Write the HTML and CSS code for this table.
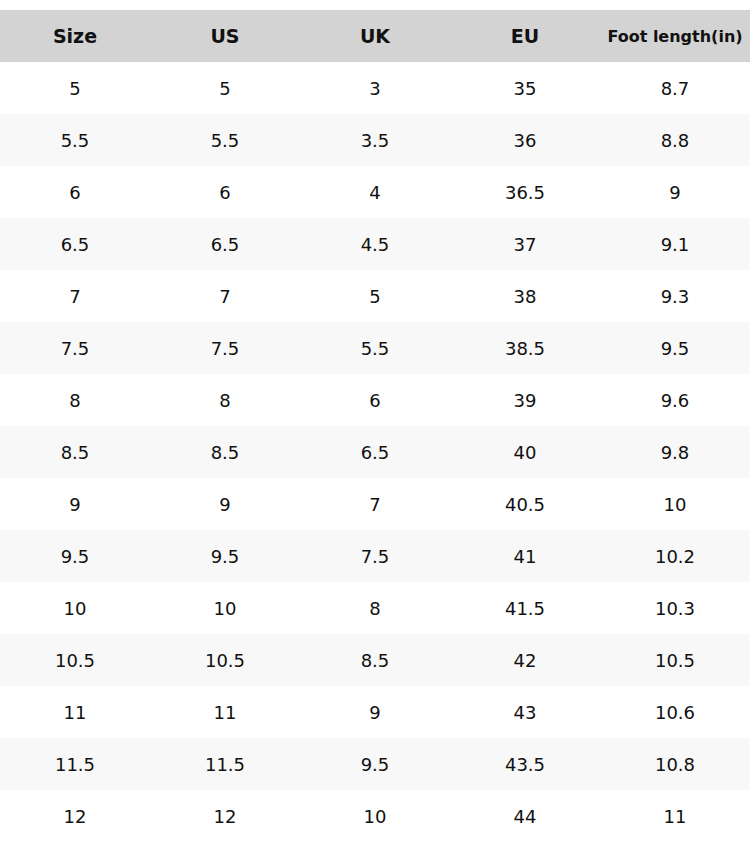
FILE: index.html
```html
<!DOCTYPE html>
<html>
<head>
<meta charset="utf-8">
<link rel="stylesheet" href="styles.css">
</head>
<body>
<div class="page">
<table class="chart">
<thead>
<tr><th>Size</th><th>US</th><th>UK</th><th>EU</th><th class="small">Foot length(in)</th></tr>
</thead>
<tbody>
<tr><td>5</td><td>5</td><td>3</td><td>35</td><td>8.7</td></tr>
<tr><td>5.5</td><td>5.5</td><td>3.5</td><td>36</td><td>8.8</td></tr>
<tr><td>6</td><td>6</td><td>4</td><td>36.5</td><td>9</td></tr>
<tr><td>6.5</td><td>6.5</td><td>4.5</td><td>37</td><td>9.1</td></tr>
<tr><td>7</td><td>7</td><td>5</td><td>38</td><td>9.3</td></tr>
<tr><td>7.5</td><td>7.5</td><td>5.5</td><td>38.5</td><td>9.5</td></tr>
<tr><td>8</td><td>8</td><td>6</td><td>39</td><td>9.6</td></tr>
<tr><td>8.5</td><td>8.5</td><td>6.5</td><td>40</td><td>9.8</td></tr>
<tr><td>9</td><td>9</td><td>7</td><td>40.5</td><td>10</td></tr>
<tr><td>9.5</td><td>9.5</td><td>7.5</td><td>41</td><td>10.2</td></tr>
<tr><td>10</td><td>10</td><td>8</td><td>41.5</td><td>10.3</td></tr>
<tr><td>10.5</td><td>10.5</td><td>8.5</td><td>42</td><td>10.5</td></tr>
<tr><td>11</td><td>11</td><td>9</td><td>43</td><td>10.6</td></tr>
<tr><td>11.5</td><td>11.5</td><td>9.5</td><td>43.5</td><td>10.8</td></tr>
<tr><td>12</td><td>12</td><td>10</td><td>44</td><td>11</td></tr>
</tbody>
</table>
</div>
</body>
</html>
```

FILE: styles.css
```css
html, body {
  margin: 0;
  padding: 0;
  background: #ffffff;
}
.page {
  padding-top: 10px;
  width: 750px;
}
.chart {
  width: 750px;
  border-collapse: collapse;
  table-layout: fixed;
  font-family: "DejaVu Sans", sans-serif;
  color: #111111;
}
.chart th {
  background: #d3d3d3;
  height: 52px;
  padding: 0;
  font-size: 19px;
  font-weight: bold;
  text-align: center;
  vertical-align: middle;
  width: 150px;
}
.chart th.small {
  font-size: 16px;
  white-space: nowrap;
}
.chart td {
  height: 52px;
  padding: 0;
  font-size: 18px;
  text-align: center;
  vertical-align: middle;
}
.chart tbody tr:nth-child(even) td {
  background: #f8f8f8;
}
```
